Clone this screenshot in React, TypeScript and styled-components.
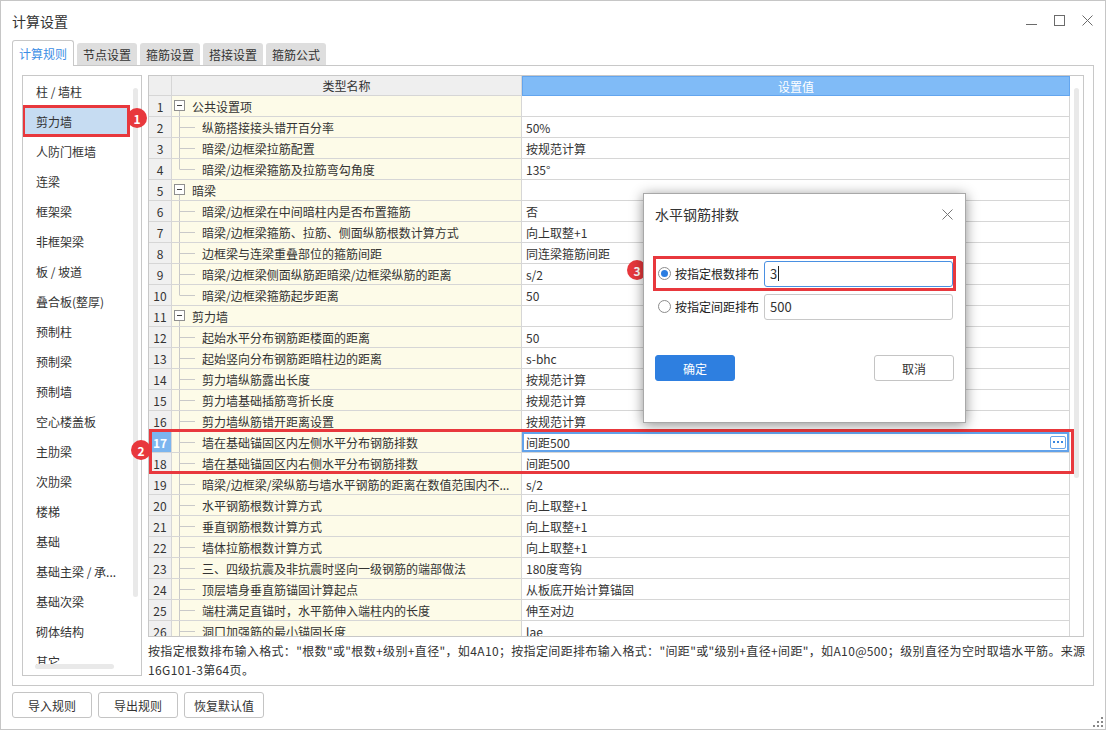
import React from 'react'
import styled, { createGlobalStyle } from 'styled-components'

const GlobalStyle = createGlobalStyle`
  html, body {
    margin: 0;
    padding: 0;
    background: #fff;
  }
  body {
    font-family: 'Noto Sans CJK SC', 'Noto Sans', sans-serif;
    font-size: 12px;
    color: #333;
  }
  * {
    box-sizing: border-box;
  }
`

const Window = styled.div`
  position: relative;
  width: 1106px;
  height: 730px;
  border: 1px solid #c6c6c6;
  background: #fff;
  display: flex;
  flex-direction: column;
  overflow: hidden;
`
const TitleBar = styled.div`
  height: 39px;
  flex: none;
  display: flex;
  align-items: center;
  justify-content: space-between;
  padding: 0 12px 0 11px;
`
const Title = styled.div`
  font-size: 14px;
  color: #333;
`
const WinControls = styled.div`
  display: flex;
  align-items: center;
  gap: 17px;
  color: #6b6b6b;
  svg {
    display: block;
  }
`
const TabBar = styled.div`
  height: 25px;
  flex: none;
  display: flex;
  align-items: flex-start;
  gap: 3px;
  padding-left: 11px;
`
const Tab = styled.div<{ $active?: boolean }>`
  position: relative;
  z-index: 2;
  display: flex;
  align-items: center;
  justify-content: center;
  padding: 0 6px;
  white-space: nowrap;
  font-size: 12px;
  border-radius: 3px 3px 0 0;
  ${(p) =>
    p.$active
      ? `
    height: 26px;
    background: #fff;
    color: #3c8ee5;
    border: 1px solid #c8c8c8;
    border-bottom: none;
    padding: 0 6px;
  `
      : `
    margin-top: 3px;
    height: 22px;
    background: #dedede;
    color: #333;
  `}
`
const Panel = styled.div`
  flex: none;
  height: 621px;
  margin: 0 11px;
  border: 1px solid #c8c8c8;
  padding: 9px 0 0 9px;
  display: flex;
  gap: 6px;
`
const Sidebar = styled.div`
  position: relative;
  width: 120px;
  height: 601px;
  flex: none;
  border: 1px solid #c8c8c8;
  display: flex;
  overflow: hidden;
`
const SideList = styled.div`
  width: 106px;
  flex: none;
`
const SideItem = styled.div<{ $selected?: boolean }>`
  height: 30px;
  display: flex;
  align-items: center;
  padding-left: 13px;
  white-space: nowrap;
  color: #333;
  ${(p) =>
    p.$selected &&
    `
    background: #c6dcf2;
    outline: 3px solid #e8383d;
    outline-offset: -2px;
  `}
`
const ScrollGutter = styled.div<{ $top: number; $len: number }>`
  flex: 1;
  display: flex;
  justify-content: center;
  padding-top: ${(p) => p.$top}px;
  &::before {
    content: '';
    display: block;
    width: 5px;
    height: ${(p) => p.$len}px;
    background: #e9e9e9;
    border-radius: 3px;
  }
`
const HScroll = styled.div`
  position: absolute;
  left: 12px;
  bottom: 6px;
  width: 79px;
  height: 5px;
  border-radius: 3px;
  background: #e9e9e9;
`
const RightCol = styled.div`
  width: 946px;
  flex: none;
  display: flex;
  flex-direction: column;
`
const TableBox = styled.div`
  position: relative;
  width: 936px;
  height: 562px;
  flex: none;
  border: 1px solid #c8c8c8;
  display: flex;
  overflow: hidden;
`
const Grid = styled.div`
  width: 921px;
  flex: none;
`
const Row = styled.div<{ $head?: boolean }>`
  display: grid;
  grid-template-columns: 23px 350px 548px;
  height: ${(p) => (p.$head ? 20 : 21)}px;
`
const Cell = styled.div`
  border-right: 1px solid #d6d6d6;
  border-bottom: 1px solid #d6d6d6;
  display: flex;
  align-items: center;
  white-space: nowrap;
  overflow: hidden;
`
const HeadCell = styled(Cell)<{ $blue?: boolean }>`
  justify-content: center;
  background: ${(p) => (p.$blue ? '#80bbf7' : '#efefef')};
  color: ${(p) => (p.$blue ? '#fff' : '#333')};
  ${(p) => p.$blue && 'border: 1px solid #63a5ee;'}
`
const NoCell = styled(Cell)<{ $active?: boolean }>`
  justify-content: center;
  background: ${(p) => (p.$active ? '#7cb5ef' : '#f0f0f0')};
  color: ${(p) => (p.$active ? '#fff' : '#333')};
  font-weight: ${(p) => (p.$active ? 700 : 400)};
`
const NameCell = styled(Cell)`
  background: #fdfbe8;
  align-items: stretch;
  span {
    align-self: center;
  }
  svg {
    flex: none;
    display: block;
  }
`
const ValueCell = styled(Cell)<{ $focus?: boolean }>`
  background: #fff;
  padding: 0 3px 0 4px;
  ${(p) => p.$focus && 'box-shadow: inset 0 0 0 2px #62a2ea;'}
`
const MoreBtn = styled.div`
  margin-left: auto;
  width: 16px;
  height: 13px;
  border: 1px solid #6aa6ea;
  border-radius: 2px;
  display: flex;
  align-items: center;
  justify-content: center;
  gap: 2px;
  i {
    width: 2px;
    height: 2px;
    background: #3b88e0;
  }
`
const MarkBox = styled.div<{ $top: number; $h: number; $w: number }>`
  position: absolute;
  left: 0;
  top: ${(p) => p.$top}px;
  width: ${(p) => p.$w}px;
  height: ${(p) => p.$h}px;
  border: 3px solid #e8383d;
  pointer-events: none;
`
const Note = styled.div`
  padding-top: 4px;
  line-height: 19px;
  white-space: nowrap;
  letter-spacing: 0.35px;
  color: #333;
`
const Footer = styled.div`
  display: flex;
  gap: 6px;
  padding: 6px 0 0 11px;
`
const Button = styled.div<{ $primary?: boolean }>`
  width: 80px;
  height: 26px;
  border-radius: 3px;
  display: flex;
  align-items: center;
  justify-content: center;
  font-size: 12px;
  border: 1px solid ${(p) => (p.$primary ? '#2e7fe0' : '#c4c4c4')};
  background: ${(p) => (p.$primary ? '#2e7fe0' : '#fff')};
  color: ${(p) => (p.$primary ? '#fff' : '#333')};
`
const Badge = styled.div<{ $x: number; $y: number; $under?: boolean }>`
  position: absolute;
  left: ${(p) => p.$x - 10}px;
  top: ${(p) => p.$y - 10}px;
  width: 20px;
  height: 20px;
  border-radius: 50%;
  background: #e8383d;
  color: #fff;
  font-weight: 700;
  font-size: 12px;
  display: flex;
  align-items: center;
  justify-content: center;
  z-index: ${(p) => (p.$under ? 3 : 5)};
`
const Grip = styled.div`
  position: absolute;
  right: 2px;
  bottom: 2px;
  svg {
    display: block;
  }
`

/* dialog */
const Dialog = styled.div`
  position: absolute;
  left: 642px;
  top: 192px;
  width: 323px;
  height: 230px;
  background: #fff;
  border: 1px solid #a8a8a8;
  box-shadow: 0 2px 12px rgba(0, 0, 0, 0.45);
  padding: 0 9px;
  display: flex;
  flex-direction: column;
  z-index: 4;
`
const DialogHead = styled.div`
  height: 40px;
  display: flex;
  align-items: center;
  justify-content: space-between;
  padding: 0 3px 0 2px;
  font-size: 14px;
  svg {
    display: block;
  }
`
const RadioRow = styled.div<{ $marked?: boolean; $gap: number }>`
  height: 35px;
  margin-top: ${(p) => p.$gap}px;
  border: 3px solid ${(p) => (p.$marked ? '#e8383d' : 'transparent')};
  display: flex;
  align-items: center;
  padding-left: 2px;
`
const Radio = styled.div<{ $on?: boolean }>`
  width: 13px;
  height: 13px;
  flex: none;
  border-radius: 50%;
  border: 1px solid #8c8c8c;
  display: flex;
  align-items: center;
  justify-content: center;
  &::after {
    content: '';
    width: 7px;
    height: 7px;
    border-radius: 50%;
    background: ${(p) => (p.$on ? '#2b7de1' : 'transparent')};
  }
`
const RadioLabel = styled.div`
  width: 89px;
  flex: none;
  margin-left: 4px;
  font-size: 12px;
  white-space: nowrap;
  color: #222;
`
const Field = styled.div<{ $focus?: boolean }>`
  flex: 1;
  height: 26px;
  border: 1px solid ${(p) => (p.$focus ? '#4a90e2' : '#c8c8c8')};
  border-radius: 3px;
  display: flex;
  align-items: center;
  padding-left: 5px;
  font-size: 13px;
`
const Caret = styled.i`
  width: 1px;
  height: 15px;
  margin-left: 1px;
  background: #222;
`
const DialogButtons = styled.div`
  margin-top: 31px;
  display: flex;
  justify-content: space-between;
  padding: 0 2px;
`

type TableRow = {
  no: number
  name: string
  value: string
  kind: 'group' | 'child'
  last?: boolean
}

const rows: TableRow[] = [
  { no: 1, name: '公共设置项', value: '', kind: 'group' },
  { no: 2, name: '纵筋搭接接头错开百分率', value: '50%', kind: 'child' },
  { no: 3, name: '暗梁/边框梁拉筋配置', value: '按规范计算', kind: 'child' },
  { no: 4, name: '暗梁/边框梁箍筋及拉筋弯勾角度', value: '135°', kind: 'child', last: true },
  { no: 5, name: '暗梁', value: '', kind: 'group' },
  { no: 6, name: '暗梁/边框梁在中间暗柱内是否布置箍筋', value: '否', kind: 'child' },
  { no: 7, name: '暗梁/边框梁箍筋、拉筋、侧面纵筋根数计算方式', value: '向上取整+1', kind: 'child' },
  { no: 8, name: '边框梁与连梁重叠部位的箍筋间距', value: '同连梁箍筋间距', kind: 'child' },
  { no: 9, name: '暗梁/边框梁侧面纵筋距暗梁/边框梁纵筋的距离', value: 's/2', kind: 'child' },
  { no: 10, name: '暗梁/边框梁箍筋起步距离', value: '50', kind: 'child', last: true },
  { no: 11, name: '剪力墙', value: '', kind: 'group' },
  { no: 12, name: '起始水平分布钢筋距楼面的距离', value: '50', kind: 'child' },
  { no: 13, name: '起始竖向分布钢筋距暗柱边的距离', value: 's-bhc', kind: 'child' },
  { no: 14, name: '剪力墙纵筋露出长度', value: '按规范计算', kind: 'child' },
  { no: 15, name: '剪力墙基础插筋弯折长度', value: '按规范计算', kind: 'child' },
  { no: 16, name: '剪力墙纵筋错开距离设置', value: '按规范计算', kind: 'child' },
  { no: 17, name: '墙在基础锚固区内左侧水平分布钢筋排数', value: '间距500', kind: 'child' },
  { no: 18, name: '墙在基础锚固区内右侧水平分布钢筋排数', value: '间距500', kind: 'child' },
  { no: 19, name: '暗梁/边框梁/梁纵筋与墙水平钢筋的距离在数值范围内不...', value: 's/2', kind: 'child' },
  { no: 20, name: '水平钢筋根数计算方式', value: '向上取整+1', kind: 'child' },
  { no: 21, name: '垂直钢筋根数计算方式', value: '向上取整+1', kind: 'child' },
  { no: 22, name: '墙体拉筋根数计算方式', value: '向上取整+1', kind: 'child' },
  { no: 23, name: '三、四级抗震及非抗震时竖向一级钢筋的端部做法', value: '180度弯钩', kind: 'child' },
  { no: 24, name: '顶层墙身垂直筋锚固计算起点', value: '从板底开始计算锚固', kind: 'child' },
  { no: 25, name: '端柱满足直锚时，水平筋伸入端柱内的长度', value: '伸至对边', kind: 'child' },
  { no: 26, name: '洞口加强筋的最小锚固长度', value: 'lae', kind: 'child' },
]

const sideItems = [
  '柱 / 墙柱',
  '剪力墙',
  '人防门框墙',
  '连梁',
  '框架梁',
  '非框架梁',
  '板 / 坡道',
  '叠合板(整厚)',
  '预制柱',
  '预制梁',
  '预制墙',
  '空心楼盖板',
  '主肋梁',
  '次肋梁',
  '楼梯',
  '基础',
  '基础主梁 / 承...',
  '基础次梁',
  '砌体结构',
  '其它',
]

const tabs = ['计算规则', '节点设置', '箍筋设置', '搭接设置', '箍筋公式']

const LINE = '#c9c9c9'

const TreeGlyph = ({ kind, last }: { kind: 'group' | 'child'; last?: boolean }) =>
  kind === 'group' ? (
    <svg width="20" height="20">
      <rect x="2.5" y="4.5" width="10" height="10" fill="#fff" stroke="#8f8f8f" />
      <line x1="5" y1="9.5" x2="10" y2="9.5" stroke="#444" />
      <line x1="7.5" y1="15" x2="7.5" y2="20" stroke={LINE} />
    </svg>
  ) : (
    <svg width="30" height="20">
      <line x1="7.5" y1="0" x2="7.5" y2={last ? 10 : 20} stroke={LINE} />
      <line x1="7.5" y1="10.5" x2="23" y2="10.5" stroke={LINE} />
    </svg>
  )

export default function App() {
  return (
    <>
      <GlobalStyle />
      <Window>
        <TitleBar>
          <Title>计算设置</Title>
          <WinControls>
            <svg width="11" height="11">
              <line x1="0" y1="9.5" x2="11" y2="9.5" stroke="currentColor" />
            </svg>
            <svg width="11" height="11">
              <rect x="0.5" y="0.5" width="10" height="10" fill="none" stroke="currentColor" />
            </svg>
            <svg width="11" height="11">
              <path d="M0.5 0.5 L10.5 10.5 M10.5 0.5 L0.5 10.5" stroke="currentColor" />
            </svg>
          </WinControls>
        </TitleBar>

        <TabBar>
          {tabs.map((t, i) => (
            <Tab key={t} $active={i === 0}>
              {t}
            </Tab>
          ))}
        </TabBar>

        <Panel>
          <Sidebar>
            <SideList>
              {sideItems.map((s, i) => (
                <SideItem key={s} $selected={i === 1}>
                  {s}
                </SideItem>
              ))}
            </SideList>
            <ScrollGutter $top={12} $len={509} />
            <HScroll />
          </Sidebar>

          <RightCol>
            <TableBox>
              <Grid>
                <Row $head>
                  <HeadCell />
                  <HeadCell>类型名称</HeadCell>
                  <HeadCell $blue>设置值</HeadCell>
                </Row>
                {rows.map((r) => (
                  <Row key={r.no}>
                    <NoCell $active={r.no === 17}>{r.no}</NoCell>
                    <NameCell>
                      <TreeGlyph kind={r.kind} last={r.last} />
                      <span>{r.name}</span>
                    </NameCell>
                    <ValueCell $focus={r.no === 17}>
                      {r.value}
                      {r.no === 17 && (
                        <MoreBtn>
                          <i />
                          <i />
                          <i />
                        </MoreBtn>
                      )}
                    </ValueCell>
                  </Row>
                ))}
              </Grid>
              <ScrollGutter $top={12} $len={390} />
              <MarkBox $top={353} $h={45} $w={925} />
            </TableBox>
            <Note>
              按指定根数排布输入格式："根数"或"根数+级别+直径"，如4A10；按指定间距排布输入格式："间距"或"级别+直径+间距"，如A10@500；级别直径为空时取墙水平筋。来源
              <br />
              16G101-3第64页。
            </Note>
          </RightCol>
        </Panel>

        <Footer>
          <Button>导入规则</Button>
          <Button>导出规则</Button>
          <Button>恢复默认值</Button>
        </Footer>

        <Dialog>
          <DialogHead>
            <span>水平钢筋排数</span>
            <svg width="11" height="11">
              <path d="M0.5 0.5 L10.5 10.5 M10.5 0.5 L0.5 10.5" stroke="#777" />
            </svg>
          </DialogHead>
          <RadioRow $marked $gap={22}>
            <Radio $on />
            <RadioLabel>按指定根数排布</RadioLabel>
            <Field $focus>
              3<Caret />
            </Field>
          </RadioRow>
          <RadioRow $gap={-2}>
            <Radio />
            <RadioLabel>按指定间距排布</RadioLabel>
            <Field>500</Field>
          </RadioRow>
          <DialogButtons>
            <Button $primary>确定</Button>
            <Button>取消</Button>
          </DialogButtons>
        </Dialog>

        <Badge $x={136} $y={117}>1</Badge>
        <Badge $x={140} $y={449}>2</Badge>
        <Badge $x={636} $y={269} $under>3</Badge>

        <Grip>
          <svg width="10" height="10">
            <rect x="8" y="0" width="2" height="2" fill="#888" />
            <rect x="4" y="4" width="2" height="2" fill="#888" />
            <rect x="8" y="4" width="2" height="2" fill="#888" />
            <rect x="0" y="8" width="2" height="2" fill="#888" />
            <rect x="4" y="8" width="2" height="2" fill="#888" />
            <rect x="8" y="8" width="2" height="2" fill="#888" />
          </svg>
        </Grip>
      </Window>
    </>
  )
}
